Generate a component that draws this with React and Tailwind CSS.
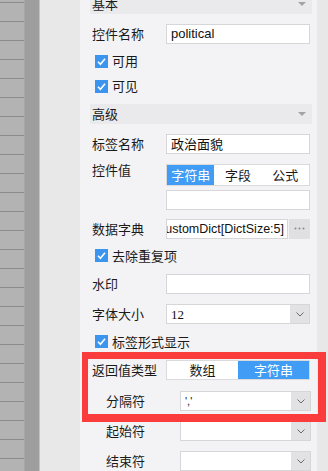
import React from "react";

const CJK = { fontFamily: '"Noto Sans CJK SC", "Noto Sans", sans-serif' };

function Header({ title, className = "" }) {
  return (
    <div className={"flex h-[20px] items-center justify-between bg-[#eaeaed] pl-[2px] pr-[6px] " + className}>
      <span className="text-[13px] leading-[20px] text-[#1a1a1a]">{title}</span>
      <svg width="8" height="4" viewBox="0 0 8 4"><path d="M0 0H8L4 4Z" fill="#a3a3a6" /></svg>
    </div>
  );
}

function Check({ label, className = "" }) {
  return (
    <div className={"flex h-[25px] items-center pl-[5px] " + className}>
      <div className="flex h-[13px] w-[13px] items-center justify-center bg-[#3b95ef]">
        <svg width="11" height="11" viewBox="0 0 11 11">
          <path d="M2 5.8L4.4 8.2L9 2.8" stroke="#fff" strokeWidth="1.6" fill="none" />
        </svg>
      </div>
      <span className="ml-[4px] text-[13px] leading-[16px] text-[#1a1a1a]">{label}</span>
    </div>
  );
}

function Label({ children, indent }) {
  return (
    <div className={(indent ? "w-[90px] pl-[16px]" : "w-[76px] pl-[2px]") + " shrink-0 text-[13px] leading-[16px] text-[#1a1a1a]"}>
      {children}
    </div>
  );
}

function Input({ children, className = "" }) {
  return (
    <div className={"flex h-[20px] items-center border border-[#d6d6d9] bg-white pl-[4px] " + className}>
      {children}
    </div>
  );
}

function Chevron() {
  return (
    <div className="flex h-full w-[19px] shrink-0 items-center justify-center bg-[#e2e2e5]">
      <svg width="8" height="5" viewBox="0 0 8 5"><path d="M0.5 0.5L4 4L7.5 0.5" stroke="#6b6b6b" strokeWidth="1" fill="none" /></svg>
    </div>
  );
}

function Select({ children, className = "" }) {
  return (
    <div className={"flex h-[20px] items-stretch border border-[#d6d6d9] bg-white " + className}>
      <div className="flex flex-1 items-center pl-[4px]">{children}</div>
      <Chevron />
    </div>
  );
}

function Segmented({ items, active, className = "" }) {
  return (
    <div className={"flex border border-[#dadadd] bg-white " + className}>
      {items.map((t, i) => (
        <div
          key={t}
          className={
            "flex flex-1 items-center justify-center text-[13px] " +
            (i === active ? "bg-[#409cf5] text-white" : "text-[#1a1a1a]")
          }
        >
          {t}
        </div>
      ))}
    </div>
  );
}

export default function App() {
  return (
    <div className="relative flex h-[471px] w-[328px] overflow-hidden" style={CJK}>
      <div className="flex w-[24px] shrink-0 flex-col bg-[#b3b3b3]">
        <div className="h-[2px] shrink-0" />
        {Array.from({ length: 25 }).map((_, i) => (
          <div key={i} className="h-[19px] shrink-0 border-t border-[#8c8c8c]" />
        ))}
      </div>
      <div className="w-[16px] shrink-0 border-l border-[#a8a8a8] border-r border-r-[#c2c2c2] bg-[#9e9e9e]" />
      <div className="w-[40px] shrink-0 bg-[#e8e8e8]" />
      <div className="flex flex-1 bg-[#f3f3f6] pl-[10px] pr-[4px]">
        <div className="flex w-[222px] flex-col">
          <Header title="基本" className="-mt-[6px]" />
          <div className="mt-[10px] flex items-center">
            <Label>控件名称</Label>
            <Input className="w-[144px]">
              <span className="text-[13px] text-[#111]" style={{ fontFamily: '"Liberation Sans", Arial, sans-serif' }}>political</span>
            </Input>
          </div>
          <Check label="可用" className="mt-[5px]" />
          <Check label="可见" />
          <Header title="高级" className="mt-[5px]" />
          <div className="mt-[10px] flex items-center">
            <Label>标签名称</Label>
            <Input className="w-[144px]">
              <span className="text-[13px] text-[#111]">政治面貌</span>
            </Input>
          </div>
          <div className="mt-[10px] flex items-start">
            <div className="w-[76px] shrink-0 pl-[2px] text-[13px] leading-[12px] text-[#1a1a1a]">控件值</div>
            <div className="flex w-[144px] flex-col">
              <Segmented items={["字符串", "字段", "公式"]} active={0} className="h-[22px]" />
              <Input className="mt-[4px] w-[144px]" />
            </div>
          </div>
          <div className="mt-[9px] flex items-center">
            <Label>数据字典</Label>
            <div className="flex h-[20px] w-[144px]">
              <div className="flex flex-1 justify-end overflow-hidden border border-[#d6d6d9] bg-white pr-[3px]">
                <span className="shrink-0 whitespace-nowrap text-[12.5px] leading-[18px] text-[#111]" style={{ fontFamily: '"Liberation Sans", Arial, sans-serif' }}>
                  CustomDict[DictSize:5]
                </span>
              </div>
              <div className="ml-[1px] flex w-[21px] items-center justify-center bg-[#e0e0e3]">
                <svg width="11" height="3" viewBox="0 0 11 3">
                  <circle cx="1.5" cy="1.5" r="1" fill="#8a8a8a" />
                  <circle cx="5.5" cy="1.5" r="1" fill="#8a8a8a" />
                  <circle cx="9.5" cy="1.5" r="1" fill="#8a8a8a" />
                </svg>
              </div>
            </div>
          </div>
          <Check label="去除重复项" className="mt-[5px]" />
          <div className="mt-[6px] flex items-center">
            <Label>水印</Label>
            <Input className="w-[144px]" />
          </div>
          <div className="mt-[10px] flex items-center">
            <Label>字体大小</Label>
            <Select className="w-[144px]">
              <span className="text-[13px] text-[#111]" style={{ fontFamily: '"Liberation Serif", serif' }}>12</span>
            </Select>
          </div>
          <Check label="标签形式显示" className="mt-[5px]" />
          <div className="mt-[6px] flex items-center">
            <Label>返回值类型</Label>
            <Segmented items={["数组", "字符串"]} active={1} className="h-[20px] w-[144px]" />
          </div>
          <div className="mt-[11px] flex items-center">
            <Label indent>分隔符</Label>
            <Select className="w-[131px]">
              <span className="text-[11px] text-[#111]" style={{ fontFamily: '"Liberation Sans", Arial, sans-serif' }}>','</span>
            </Select>
          </div>
          <div className="mt-[10px] flex items-center">
            <Label indent>起始符</Label>
            <Select className="w-[131px]" />
          </div>
          <div className="mt-[10px] flex items-center">
            <Label indent>结束符</Label>
            <Select className="w-[131px]" />
          </div>
        </div>
      </div>
      <div className="w-[11px] shrink-0 bg-[#e8e8e8]" />
      <div className="absolute left-[82px] top-[352px] h-[70px] w-[244px] border-b-[8px] border-l-[6px] border-r-[8px] border-t-[7px] border-[#fb3c3c]" />
    </div>
  );
}
